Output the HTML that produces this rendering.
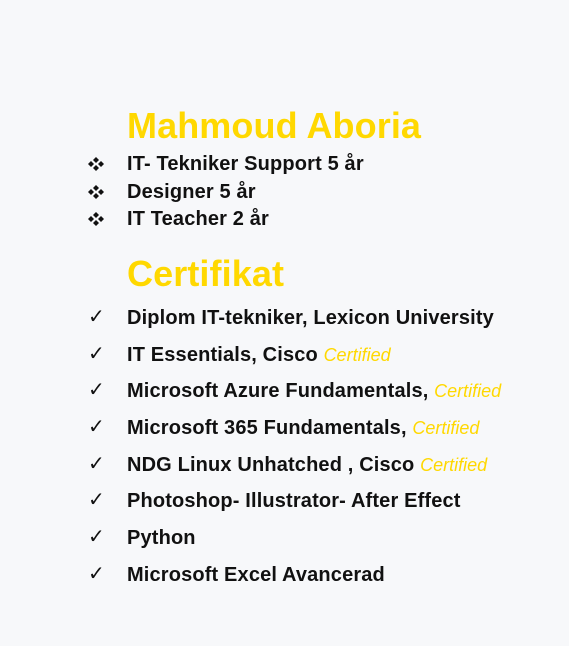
<!DOCTYPE html>
<html><head><meta charset="utf-8"><style>
body{margin:0;width:569px;height:646px;background:#f7f8fa;font-family:"Liberation Sans",sans-serif;font-weight:bold;color:#111;position:relative;overflow:hidden}
.t{position:absolute;left:127px;color:#ffd800;font-size:36px;line-height:40px;letter-spacing:0.1px}
.r{position:absolute;left:0;width:569px;font-size:20px;line-height:24px;letter-spacing:0.15px;white-space:nowrap}
.r svg{position:absolute;left:88px;top:5px}
.r .c{position:absolute;left:88px;font-weight:normal;font-size:20px;font-family:"DejaVu Sans",sans-serif;top:-2px}
.r .x{position:absolute;left:127px}
.y{color:#ffd800;font-style:italic;font-weight:normal;font-size:18px;letter-spacing:0}
</style></head><body>
<div class="t" style="top:106px">Mahmoud Aboria</div>
<div class="r" style="top:152px"><svg width="16" height="14" viewBox="0 0 16 14"><g fill="#111"><path d="M8 0l3 3-3 3-3-3z"/><path d="M8 8l3 3-3 3-3-3z"/><path d="M3 4l3 3-3 3-3-3z"/><path d="M13 4l3 3-3 3-3-3z"/></g></svg><span class="x">IT- Tekniker Support 5 år</span></div>
<div class="r" style="top:180px"><svg width="16" height="14" viewBox="0 0 16 14"><g fill="#111"><path d="M8 0l3 3-3 3-3-3z"/><path d="M8 8l3 3-3 3-3-3z"/><path d="M3 4l3 3-3 3-3-3z"/><path d="M13 4l3 3-3 3-3-3z"/></g></svg><span class="x">Designer 5 år</span></div>
<div class="r" style="top:207px"><svg width="16" height="14" viewBox="0 0 16 14"><g fill="#111"><path d="M8 0l3 3-3 3-3-3z"/><path d="M8 8l3 3-3 3-3-3z"/><path d="M3 4l3 3-3 3-3-3z"/><path d="M13 4l3 3-3 3-3-3z"/></g></svg><span class="x">IT Teacher 2 år</span></div>
<div class="t" style="top:254px">Certifikat</div>
<div class="r" style="top:306px"><span class="c">✓</span><span class="x">Diplom IT-tekniker, Lexicon University</span></div>
<div class="r" style="top:343px"><span class="c">✓</span><span class="x">IT Essentials, Cisco <span class="y">Certified</span></span></div>
<div class="r" style="top:379px"><span class="c">✓</span><span class="x">Microsoft Azure Fundamentals, <span class="y">Certified</span></span></div>
<div class="r" style="top:416px"><span class="c">✓</span><span class="x">Microsoft 365 Fundamentals, <span class="y">Certified</span></span></div>
<div class="r" style="top:453px"><span class="c">✓</span><span class="x">NDG Linux Unhatched , Cisco <span class="y">Certified</span></span></div>
<div class="r" style="top:489px"><span class="c">✓</span><span class="x">Photoshop- Illustrator- After Effect</span></div>
<div class="r" style="top:526px"><span class="c">✓</span><span class="x">Python</span></div>
<div class="r" style="top:563px"><span class="c">✓</span><span class="x">Microsoft Excel Avancerad</span></div>
</body></html>
